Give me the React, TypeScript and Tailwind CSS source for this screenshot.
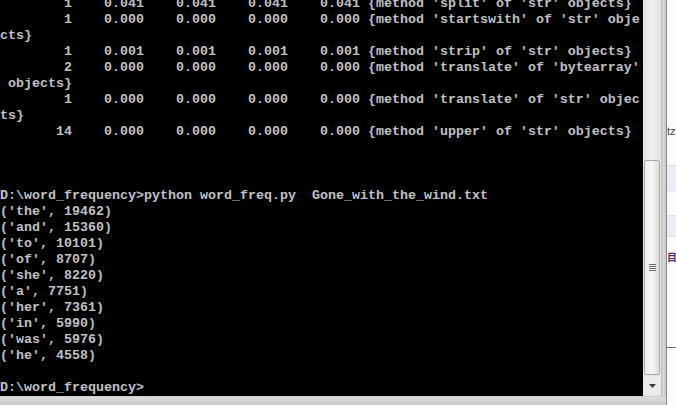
const rows = [
  "        1    0.041    0.041    0.041    0.041 {method 'split' of 'str' objects}",
  "        1    0.000    0.000    0.000    0.000 {method 'startswith' of 'str' obje",
  "cts}",
  "        1    0.001    0.001    0.001    0.001 {method 'strip' of 'str' objects}",
  "        2    0.000    0.000    0.000    0.000 {method 'translate' of 'bytearray'",
  " objects}",
  "        1    0.000    0.000    0.000    0.000 {method 'translate' of 'str' objec",
  "ts}",
  "       14    0.000    0.000    0.000    0.000 {method 'upper' of 'str' objects}",
  "",
  "",
  "",
  "D:\\word_frequency>python word_freq.py  Gone_with_the_wind.txt",
  "('the', 19462)",
  "('and', 15360)",
  "('to', 10101)",
  "('of', 8707)",
  "('she', 8220)",
  "('a', 7751)",
  "('her', 7361)",
  "('in', 5990)",
  "('was', 5976)",
  "('he', 4558)",
  "",
  "D:\\word_frequency>",
];

function Scrollbar() {
  return (
    <div className="flex w-[18px] flex-col bg-[#e6e6e6] px-[1px]">
      <div className="h-[160px] bg-gradient-to-r from-[#e2e2e2] via-[#f0f0f0] to-[#e2e2e2]" />
      <div className="flex h-[215px] flex-col items-center justify-center rounded-[2px] border border-[#a9a9a9] bg-gradient-to-r from-[#eeeeee] via-[#f7f7f7] to-[#dcdcdc]">
        <div className="flex flex-col gap-[1px]">
          <div className="h-[1px] w-[7px] bg-[#6d6d6d]" />
          <div className="h-[1px] w-[7px] bg-[#6d6d6d]" />
          <div className="h-[1px] w-[7px] bg-[#6d6d6d]" />
          <div className="h-[1px] w-[7px] bg-[#6d6d6d]" />
        </div>
      </div>
      <div className="h-[2px]" />
      <div className="flex h-[17px] items-center justify-center bg-[#ececec]">
        <svg width="7" height="4" viewBox="0 0 7 4">
          <path d="M0 0h7L3.5 4z" fill="#3c3c3c" />
        </svg>
      </div>
      <div className="flex-1" />
    </div>
  );
}

export default function App() {
  return (
    <div className="flex h-[405px] w-[676px] overflow-hidden bg-[#f4f4f4]">
      <div className="flex w-[666px] flex-col">
        <div className="flex h-[396px]">
          <div className="w-[643px] overflow-hidden bg-black">
            <div
              className="-mt-[4px] flex flex-col font-bold text-[#c0c0c0] text-[13.333px]"
              style={{ fontFamily: '"Liberation Mono", "DejaVu Sans Mono", monospace' }}
            >
              {rows.map((r, i) => (
                <div key={i} className="h-[16px] whitespace-pre leading-[16px]">
                  {r}
                </div>
              ))}
            </div>
          </div>
          <Scrollbar />
          <div className="w-[5px] bg-gradient-to-r from-[#bdbdbd] via-[#dadada] to-[#c4c4c4]" />
        </div>
        <div className="flex-1 border-t border-[#cfcfcf] bg-gradient-to-b from-[#dcdcdc] to-[#c8c8c8]" />
      </div>
      <div className="flex flex-1 flex-col border-l border-[#8a8a8a] bg-[#fbfbfb]">
        <div className="h-[124px]" />
        <div
          className="h-[14px] text-[11px] leading-[14px] text-[#444]"
          style={{ fontFamily: '"Liberation Sans", sans-serif' }}
        >
          tz
        </div>
        <div className="h-[27px]" />
        <div className="h-[27px] border-y border-[#dfe5ee] bg-[#e9eef7]" />
        <div className="h-[23px]" />
        <div className="h-[22px] border-y border-[#dfe5ee] bg-[#e9eef7]" />
        <div className="h-[14px]" />
        <div
          className="h-[12px] text-[10px] font-bold leading-[12px] text-[#5a2a7a]"
          style={{ fontFamily: '"Noto Sans CJK SC", sans-serif' }}
        >
          目
        </div>
        <div className="h-[84px]" />
        <div className="h-[1px] bg-[#6a6a6a]" />
      </div>
    </div>
  );
}
